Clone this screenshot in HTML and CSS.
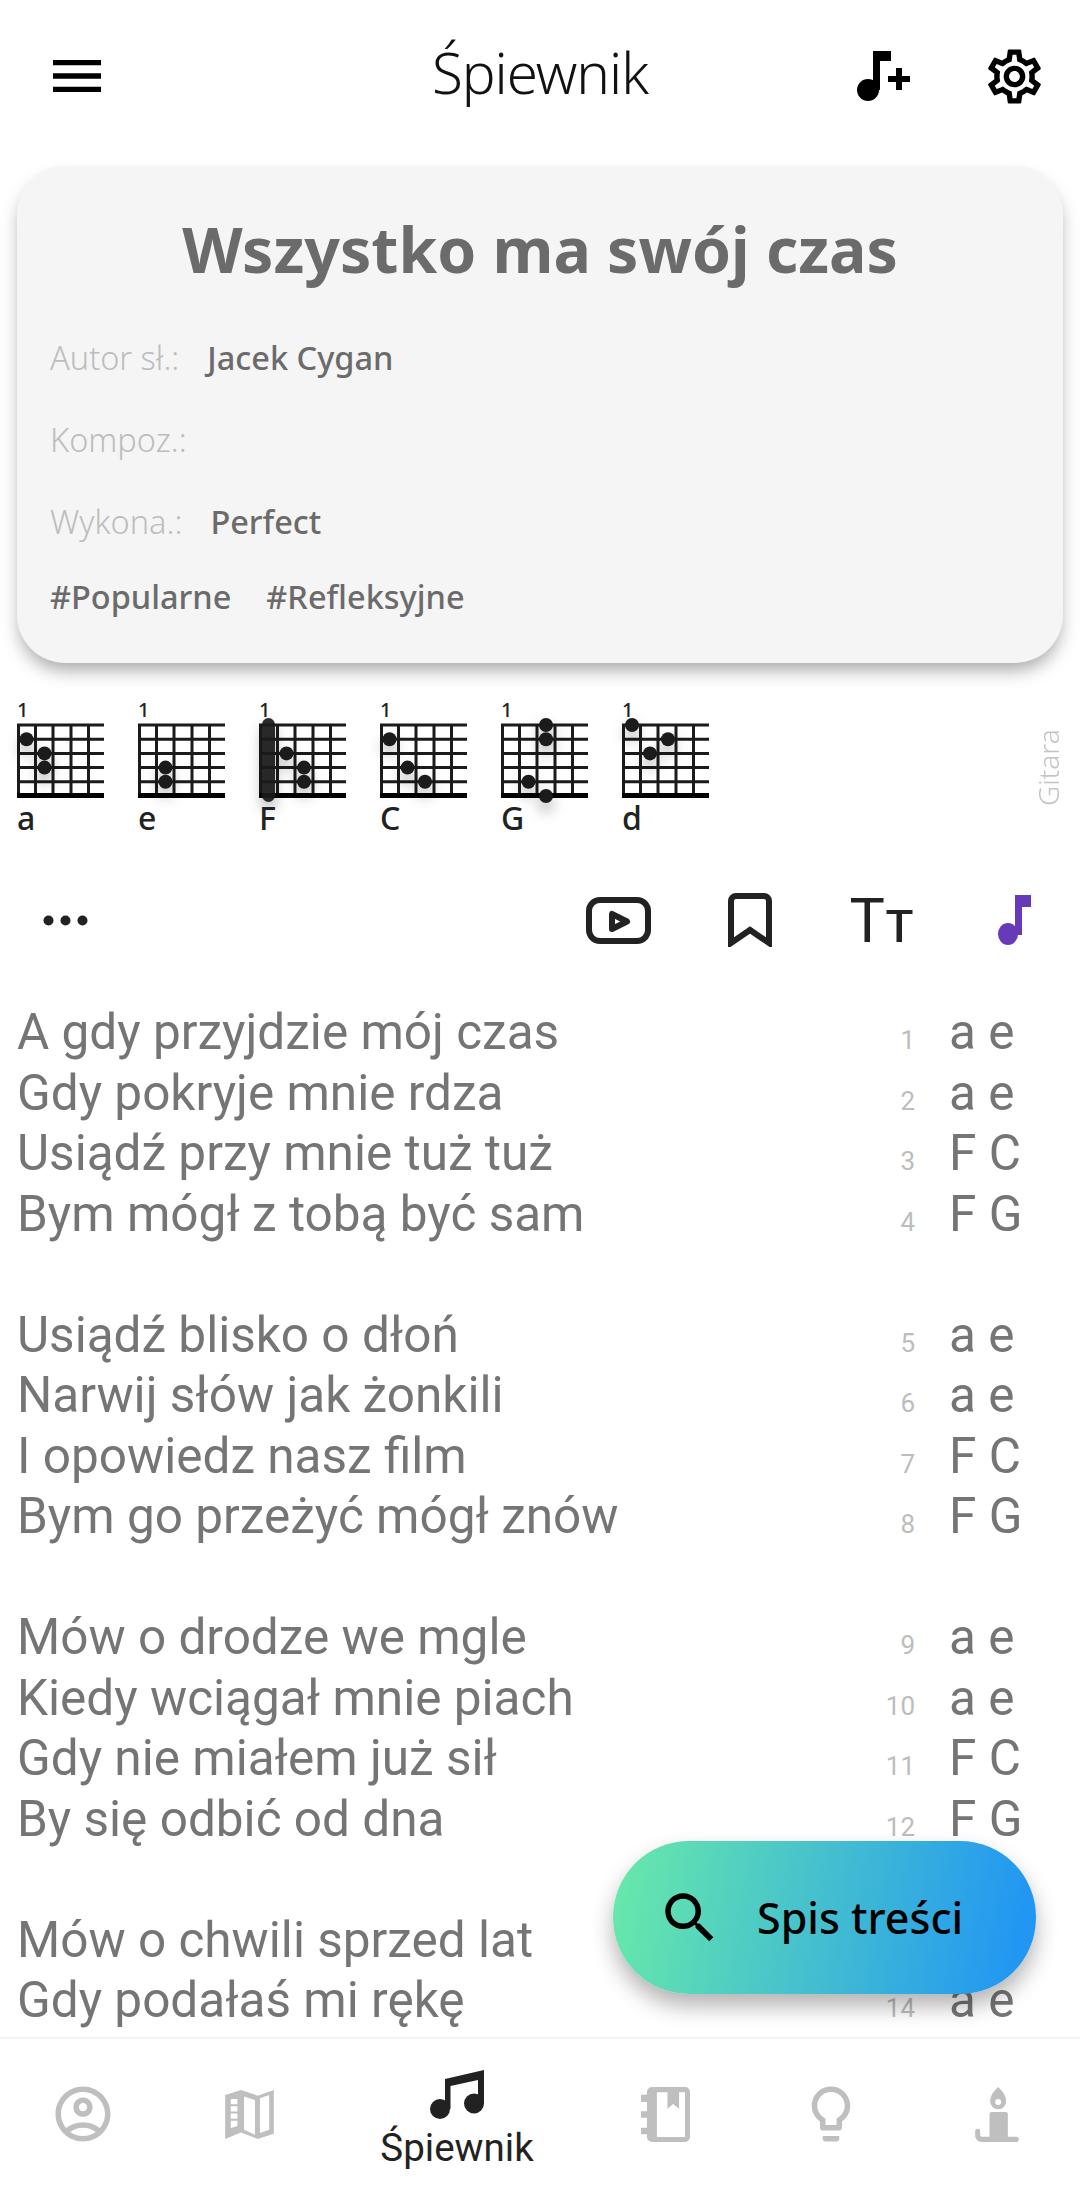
FILE: index.html
```html
<!DOCTYPE html>
<html lang="pl">
<head>
  <meta charset="UTF-8" />
  <meta name="viewport" content="width=device-width, initial-scale=1.0" />
  <title>Śpiewnik</title>
  <link rel="stylesheet" href="styles.css">
</head>
<body>

  <!-- shared chord grid -->
  <svg class="defs" width="0" height="0">
    <defs>
      <g id="grid">
        <path class="grid-line" d="M0 1H87M0 15.2H87M0 29.4H87M0 43.6H87M0 57.8H87M1.5 0V72M18.5 0V72M36 0V72M54 0V72M71.5 0V72" />
        <rect x="0" y="69" width="87" height="5" />
      </g>
    </defs>
  </svg>

  <div class="page">
    <header class="topbar">
      <div class="topbar-left">
        <svg class="icon-menu" viewBox="3 6 18 12"><path d="M3 18h18v-2H3v2zm0-5h18v-2H3v2zm0-7v2h18V6H3z"/></svg>
      </div>
      <h1>Śpiewnik</h1>
      <div class="topbar-right">
        <span class="slot">
          <svg class="icon-addnote" viewBox="857 51 54 50"><circle cx="868" cy="90" r="11"/><path d="M873 51h18v10h-11v29h-7zM896 68h6v8h8v6h-8v8h-6v-8h-8v-6h8z"/></svg>
        </span>
        <span class="slot">
          <svg class="icon-gear" viewBox="0 0 24 24"><path d="M19.43 12.98c.04-.32.07-.64.07-.98 0-.34-.03-.66-.07-.98l2.11-1.65c.19-.15.24-.42.12-.64l-2-3.46c-.09-.16-.26-.25-.44-.25-.06 0-.12.01-.17.03l-2.49 1c-.52-.4-1.08-.73-1.69-.98l-.38-2.65C14.46 2.18 14.25 2 14 2h-4c-.25 0-.46.18-.49.42l-.38 2.65c-.61.25-1.17.59-1.69.98l-2.49-1c-.06-.02-.12-.03-.18-.03-.17 0-.34.09-.43.25l-2 3.46c-.13.22-.07.49.12.64l2.11 1.65c-.04.32-.07.65-.07.98 0 .33.03.66.07.98l-2.11 1.65c-.19.15-.24.42-.12.64l2 3.46c.09.16.26.25.44.25.06 0 .12-.01.17-.03l2.49-1c.52.4 1.08.73 1.69.98l.38 2.65c.03.24.24.42.49.42h4c.25 0 .46-.18.49-.42l.38-2.65c.61-.25 1.17-.59 1.69-.98l2.49 1c.06.02.12.03.18.03.17 0 .34-.09.43-.25l2-3.46c.12-.22.07-.49-.12-.64l-2.11-1.65zm-1.98-1.71c.04.31.05.52.05.73 0 .21-.02.43-.05.73l-.14 1.13.89.7 1.08.84-.7 1.21-1.27-.51-1.04-.42-.9.68c-.43.32-.84.56-1.25.73l-1.06.43-.16 1.13-.2 1.35h-1.4l-.19-1.35-.16-1.13-1.06-.43c-.43-.18-.83-.41-1.23-.71l-.91-.7-1.06.43-1.27.51-.7-1.21 1.08-.84.89-.7-.14-1.13c-.03-.31-.05-.54-.05-.74s.02-.43.05-.73l.14-1.13-.89-.7-1.08-.84.7-1.21 1.27.51 1.04.42.9-.68c.43-.32.84-.56 1.25-.73l1.06-.43.16-1.13.2-1.35h1.39l.19 1.35.16 1.13 1.06.43c.43.18.83.41 1.23.71l.91.7 1.06-.43 1.27-.51.7 1.21-1.07.85-.89.7.14 1.13zM12 8c-2.21 0-4 1.79-4 4s1.79 4 4 4 4-1.79 4-4-1.79-4-4-4zm0 6c-1.1 0-2-.9-2-2s.9-2 2-2 2 .9 2 2-.9 2-2 2z"/></svg>
        </span>
      </div>
    </header>

    <main class="content">
      <section class="song-card">
        <h2>Wszystko ma swój czas</h2>
        <div class="meta-row"><span class="meta-label">Autor sł.:</span><span class="meta-value">Jacek Cygan</span></div>
        <div class="meta-row"><span class="meta-label">Kompoz.:</span></div>
        <div class="meta-row"><span class="meta-label">Wykona.:</span><span class="meta-value">Perfect</span></div>
        <div class="tags"><span>#Popularne</span><span>#Refleksyjne</span></div>
      </section>

      <section class="chords">
        <div class="chord">
          <span class="chord-fret">1</span>
          <svg class="chord-grid" viewBox="0 0 87 74"><use href="#grid"/><g class="dots"><circle cx="9.5" cy="15.2" r="7"/><circle cx="27.5" cy="29.4" r="7"/><circle cx="27.5" cy="43.6" r="7"/></g></svg>
          <span class="chord-name">a</span>
        </div>
        <div class="chord">
          <span class="chord-fret">1</span>
          <svg class="chord-grid" viewBox="0 0 87 74"><use href="#grid"/><g class="dots"><circle cx="27.5" cy="43.6" r="7"/><circle cx="27.5" cy="57.8" r="7"/></g></svg>
          <span class="chord-name">e</span>
        </div>
        <div class="chord">
          <span class="chord-fret">1</span>
          <svg class="chord-grid" viewBox="0 0 87 74"><use href="#grid"/><g class="dots"><rect class="barre" x="3" y="-6" width="13" height="84" rx="6.5"/><circle cx="27.5" cy="29.4" r="7"/><circle cx="45" cy="43.6" r="7"/><circle cx="45" cy="57.8" r="7"/></g></svg>
          <span class="chord-name">F</span>
        </div>
        <div class="chord">
          <span class="chord-fret">1</span>
          <svg class="chord-grid" viewBox="0 0 87 74"><use href="#grid"/><g class="dots"><circle cx="9.5" cy="15.2" r="7"/><circle cx="27.5" cy="43.6" r="7"/><circle cx="45" cy="57.8" r="7"/></g></svg>
          <span class="chord-name">C</span>
        </div>
        <div class="chord">
          <span class="chord-fret">1</span>
          <svg class="chord-grid" viewBox="0 0 87 74"><use href="#grid"/><g class="dots"><circle cx="45" cy="1" r="7"/><circle cx="45" cy="15.2" r="7"/><circle cx="27.5" cy="57.8" r="7"/><circle cx="45" cy="72" r="7"/></g></svg>
          <span class="chord-name">G</span>
        </div>
        <div class="chord">
          <span class="chord-fret">1</span>
          <svg class="chord-grid" viewBox="0 0 87 74"><use href="#grid"/><g class="dots"><circle cx="10" cy="1" r="7"/><circle cx="28" cy="29.4" r="7"/><circle cx="46" cy="15.2" r="7"/></g></svg>
          <span class="chord-name">d</span>
        </div>
        <span class="instrument">Gitara</span>
      </section>

      <section class="toolbar">
        <svg class="icon-dots" viewBox="0 0 45 11"><circle cx="5.5" cy="5.5" r="5"/><circle cx="22.5" cy="5.5" r="5"/><circle cx="39.5" cy="5.5" r="5"/></svg>
        <div class="toolbar-actions">
          <span class="action">
            <svg class="icon-video" viewBox="586 898 65 47"><rect x="589" y="901" width="59" height="41" rx="11"/><path d="M612 915v15l15-7.5z"/></svg>
          </span>
          <span class="action">
            <svg class="icon-bookmark" viewBox="728 895 44 54"><path d="M731 945V903a5 5 0 0 1 5-5h28a5 5 0 0 1 5 5v42l-19-13z"/></svg>
          </span>
          <span class="action">
            <svg class="icon-textsize" viewBox="851 898 62 44"><path d="M851 898h32.5v4.5h-13.5v39.5h-5.500v-39.500h-13.500zM886.500 910h26v4h-10.500v28h-5.500v-28h-10z"/></svg>
          </span>
          <span class="action">
            <svg class="icon-note" viewBox="998 895 33 50"><ellipse cx="1008" cy="934" rx="10" ry="11"/><path d="M1015 895h16v12h-9v28h-7z"/></svg>
          </span>
        </div>
      </section>

      <section class="lyrics">
        <div class="line"><span class="text">A gdy przyjdzie mój czas</span><span class="num">1</span><span class="tab">a e</span></div>
        <div class="line"><span class="text">Gdy pokryje mnie rdza</span><span class="num">2</span><span class="tab">a e</span></div>
        <div class="line"><span class="text">Usiądź przy mnie tuż tuż</span><span class="num">3</span><span class="tab">F C</span></div>
        <div class="line"><span class="text">Bym mógł z tobą być sam</span><span class="num">4</span><span class="tab">F G</span></div>
        <div class="line blank"></div>
        <div class="line"><span class="text">Usiądź blisko o dłoń</span><span class="num">5</span><span class="tab">a e</span></div>
        <div class="line"><span class="text">Narwij słów jak żonkili</span><span class="num">6</span><span class="tab">a e</span></div>
        <div class="line"><span class="text">I opowiedz nasz film</span><span class="num">7</span><span class="tab">F C</span></div>
        <div class="line"><span class="text">Bym go przeżyć mógł znów</span><span class="num">8</span><span class="tab">F G</span></div>
        <div class="line blank"></div>
        <div class="line"><span class="text">Mów o drodze we mgle</span><span class="num">9</span><span class="tab">a e</span></div>
        <div class="line"><span class="text">Kiedy wciągał mnie piach</span><span class="num">10</span><span class="tab">a e</span></div>
        <div class="line"><span class="text">Gdy nie miałem już sił</span><span class="num">11</span><span class="tab">F C</span></div>
        <div class="line"><span class="text">By się odbić od dna</span><span class="num">12</span><span class="tab">F G</span></div>
        <div class="line blank"></div>
        <div class="line"><span class="text">Mów o chwili sprzed lat</span><span class="num"></span><span class="tab"></span></div>
        <div class="line"><span class="text">Gdy podałaś mi rękę</span><span class="num">14</span><span class="tab">a e</span></div>
      </section>
    </main>

    <button class="fab" type="button">
      <svg class="icon-search" viewBox="0 0 24 24"><path d="M15.5 14h-.79l-.28-.27C15.41 12.59 16 11.11 16 9.5 16 5.91 13.09 3 9.5 3S3 5.91 3 9.5 5.91 16 9.5 16c1.61 0 3.09-.59 4.23-1.57l.27.28v.79l5 4.99L20.49 19l-4.99-5zm-6 0C7.01 14 5 11.99 5 9.5S7.01 5 9.5 5 14 7.01 14 9.5 11.99 14 9.5 14z"/></svg>
      <span>Spis treści</span>
    </button>

    <nav class="tabbar">
      <a class="tab-item">
        <svg class="nav-icon" viewBox="0 0 24 24"><path d="M12 2C6.48 2 2 6.48 2 12s4.48 10 10 10 10-4.48 10-10S17.52 2 12 2zM7.35 18.5C8.66 17.56 10.26 17 12 17s3.34.56 4.65 1.5c-1.31.94-2.91 1.5-4.65 1.5s-3.34-.56-4.65-1.5zm10.79-1.38C16.45 15.8 14.32 15 12 15s-4.45.8-6.14 2.12C4.7 15.73 4 13.95 4 12c0-4.42 3.58-8 8-8s8 3.58 8 8c0 1.95-.7 3.73-1.86 5.12z"/><path d="M12 6c-1.93 0-3.5 1.57-3.5 3.5S10.07 13 12 13s3.5-1.57 3.5-3.5S13.93 6 12 6zm0 5c-.83 0-1.5-.67-1.5-1.5S11.17 8 12 8s1.5.67 1.5 1.5S12.83 11 12 11z"/></svg>
      </a>
      <a class="tab-item">
        <svg class="icon-map" viewBox="555 85 147 148"><path fill-rule="evenodd" d="M555 100L603 85L653 102L702 85V217L653 233L603 213L555 233ZM660 110V215L688 205V100ZM612 105V205L645 220V115ZM572 112V128H592V112ZM572 134V150H592V134ZM572 156V172H592V156ZM572 178V200L592 194V178Z"/></svg>
      </a>
      <a class="tab-item active">
        <svg class="icon-music" viewBox="428 2069 54 50"><circle cx="438" cy="2109" r="10"/><circle cx="472" cy="2103.5" r="10"/><path d="M443 2079L482 2070V2104H476V2080L448.5 2086V2109H443Z"/></svg>
        <span class="tab-label">Śpiewnik</span>
      </a>
      <a class="tab-item">
        <svg class="icon-book" viewBox="720 77 148 166"><path fill-rule="evenodd" d="M753 77H853a15 15 0 0 1 15 15V228a15 15 0 0 1-15 15H753a15 15 0 0 1-15-15V220H720V200H738V170H720V150H738V122H720V100H738V92a15 15 0 0 1 15-15ZM768 93V228H853V93H835V143L817 128L800 143V93Z"/></svg>
      </a>
      <a class="tab-item">
        <svg class="nav-icon" viewBox="0 0 24 24"><path d="M9 21c0 .55.45 1 1 1h4c.55 0 1-.45 1-1v-1H9v1zm3-19C8.14 2 5 5.14 5 9c0 2.38 1.19 4.47 3 5.74V17c0 .55.45 1 1 1h6c.55 0 1-.45 1-1v-2.26c1.81-1.27 3-3.36 3-5.74 0-3.86-3.14-7-7-7zm2.85 11.1l-.85.6V16h-4v-2.3l-.85-.6C7.8 12.16 7 10.63 7 9c0-2.76 2.24-5 5-5s5 2.24 5 5c0 1.63-.8 3.16-2.15 4.1z"/></svg>
      </a>
      <a class="tab-item">
        <svg class="icon-candle" viewBox="555 47 131 165"><path fill-rule="evenodd" d="M624 47C636 58 648 72 648 90A24 24 0 0 1 600 90C600 72 612 58 624 47ZM624 83A9 9 0 1 0 624 101A9 9 0 1 0 624 83Z"/><path d="M604 122H647a6 6 0 0 1 6 6V196H678a8 8 0 0 1 0 16H575C563 212 555 204 555 192V180a7.5 7.5 0 0 1 15 0V190C570 194 573 196 577 196H598V128a6 6 0 0 1 6-6Z"/></svg>
      </a>
    </nav>
  </div>

</body>
</html>
```

FILE: styles.css
```css
* {
  box-sizing: border-box;
}
html, body {
  margin: 0;
  padding: 0;
  height: 100%;
}
body {
  font-family: "Noto Sans", sans-serif;
  background: #fff;
  color: #222;
}
.defs {
  position: absolute;
}
svg {
  display: block;
}
.page {
  position: relative;
  display: flex;
  flex-direction: column;
  height: 2192px;
  overflow: hidden;
}

/* top bar */
.topbar {
  flex: none;
  display: grid;
  grid-template-columns: 1fr auto 1fr;
  align-items: center;
  height: 152px;
}
.topbar-left {
  padding-left: 52px;
}
.icon-menu {
  width: 50px;
  height: 32px;
}
.topbar h1 {
  margin: -8px 0 0;
  font-size: 56.5px;
  font-weight: 300;
  color: #111;
  letter-spacing: -1px;
}
.topbar-right {
  display: flex;
  justify-content: flex-end;
}
.slot, .action {
  display: flex;
  justify-content: center;
  align-items: center;
  width: 132px;
}
.icon-addnote {
  width: 54px;
  height: 50px;
  margin-left: 3px;
}
.icon-gear {
  width: 65px;
  height: 65px;
}

.content {
  flex: 1;
  min-height: 0;
  overflow: hidden;
}

/* song card */
.song-card {
  margin: 14px 17px 0;
  height: 497px;
  padding: 50px 33px 0;
  background: #f5f5f5;
  border-radius: 48px;
  box-shadow: 0 10px 18px -3px rgba(0, 0, 0, 0.35);
}
.song-card h2 {
  margin: -2px 0 32px;
  height: 70px;
  line-height: 70px;
  text-align: center;
  font-size: 62.5px;
  font-weight: 700;
  color: #6b6b6b;
}
.meta-row {
  display: flex;
  align-items: center;
  height: 82px;
  font-size: 32.5px;
}
.meta-label {
  font-weight: 300;
  color: #bdbdbd;
  margin-right: 28px;
}
.meta-value {
  font-weight: 500;
  color: #6b6b6b;
}
.tags {
  display: flex;
  align-items: center;
  gap: 35px;
  height: 68px;
  font-size: 32.5px;
  font-weight: 500;
  color: #6b6b6b;
}

/* chord diagrams */
.chords {
  display: flex;
  margin-top: 37px;
  padding-left: 17px;
  height: 136px;
}
.chord {
  display: flex;
  flex-direction: column;
  width: 121px;
}
.chord-fret {
  height: 24px;
  line-height: 19px;
  font-size: 20px;
  font-weight: 500;
}
.chord-grid {
  width: 87px;
  height: 74px;
  overflow: visible;
}
.grid-line {
  fill: none;
  stroke: #1b1b1b;
  stroke-width: 3;
}
.chord-grid rect {
  fill: #1b1b1b;
}
.chord-grid .barre {
  fill-opacity: 0.93;
}
.dots {
  fill: #1b1b1b;
  filter: drop-shadow(0 8px 7px rgba(0, 0, 0, 0.32));
}
.chord-name {
  margin-top: 2px;
  line-height: 36px;
  font-size: 32px;
  font-weight: 500;
}
.instrument {
  margin: 34px 18px 0 auto;
  writing-mode: vertical-rl;
  transform: rotate(180deg);
  height: 72px;
  font-size: 28px;
  font-weight: 300;
  line-height: 28px;
  color: #c4c4c4;
}

/* toolbar */
.toolbar {
  display: flex;
  align-items: center;
  justify-content: space-between;
  margin-top: 54px;
  padding-left: 43px;
  height: 60px;
}
.icon-dots {
  width: 45px;
  height: 11px;
  fill: #222;
}
.toolbar-actions {
  display: flex;
}
.icon-video {
  width: 65px;
  height: 47px;
}
.icon-video rect, .icon-video path {
  fill: none;
  stroke: #222;
  stroke-width: 6;
  stroke-linejoin: round;
}
.icon-bookmark {
  width: 44px;
  height: 54px;
}
.icon-bookmark path {
  fill: none;
  stroke: #222;
  stroke-width: 6;
}
.icon-textsize {
  width: 62px;
  height: 44px;
  fill: #222;
}
.icon-note {
  width: 33px;
  height: 50px;
  fill: #673ab7;
}

/* lyrics */
.lyrics {
  margin-top: 52px;
  padding-left: 17px;
}
.line {
  display: flex;
  align-items: baseline;
  height: 60.5px;
  line-height: 60.5px;
  font-family: Roboto, sans-serif;
  font-size: 49.5px;
  color: #757575;
}
.text {
  flex: 1;
}
.num {
  width: 60px;
  text-align: right;
  font-size: 26px;
  color: #bdbdbd;
}
.tab {
  width: 165px;
  padding-left: 34px;
}

/* floating button */
.fab {
  position: absolute;
  right: 44px;
  bottom: 198px;
  display: flex;
  align-items: center;
  gap: 34px;
  width: 423px;
  height: 153px;
  padding: 0 0 0 44px;
  border: none;
  border-radius: 76px;
  background: linear-gradient(100deg, #69eaa9 0%, #2196f3 95%);
  box-shadow: 0 12px 22px rgba(0, 0, 0, 0.3);
  font-family: "Noto Sans", sans-serif;
  font-size: 43px;
  font-weight: 500;
  color: #000;
}
.icon-search {
  width: 66px;
  height: 66px;
}

/* bottom tabs */
.tabbar {
  flex: none;
  display: flex;
  height: 155px;
  background: #fff;
  border-top: 2px solid #f4f4f4;
  position: relative;
}
.tab-item {
  flex: 0 0 166px;
  display: flex;
  flex-direction: column;
  align-items: center;
  justify-content: center;
  padding-bottom: 3px;
  fill: #bfbfbf;
}
.tab-item.active {
  flex: 1;
  justify-content: flex-start;
  padding: 30px 0 0;
  fill: #222;
}
.nav-icon {
  width: 66px;
  height: 66px;
}
.icon-map {
  width: 49px;
  height: 49px;
}
.icon-music {
  width: 54px;
  height: 50px;
}
.icon-book {
  width: 49px;
  height: 55px;
}
.icon-candle {
  width: 44px;
  height: 55px;
}
.tab-label {
  margin-top: 8px;
  line-height: 42px;
  font-family: Roboto, sans-serif;
  font-size: 38.5px;
  color: #222;
}
```
